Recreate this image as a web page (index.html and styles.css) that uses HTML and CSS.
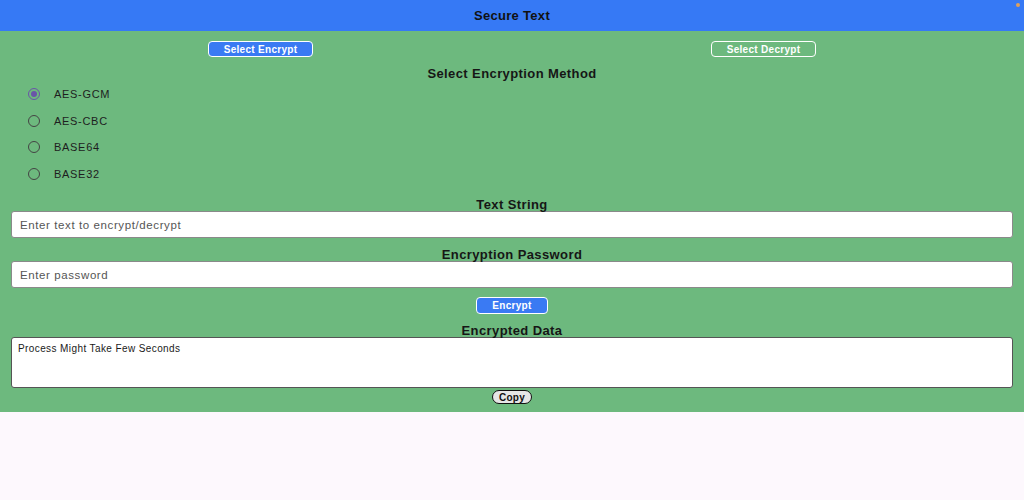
FILE: index.html
```html
<!DOCTYPE html>
<html>
<head>
<meta charset="utf-8">
<link rel="stylesheet" href="styles.css">
</head>
<body>
<header class="topbar">
  <h1 class="title">Secure Text</h1>
  <span class="dot"></span>
</header>
<main class="panel">
  <div class="mode-row">
    <div class="mode-cell"><button class="btn btn-blue">Select Encrypt</button></div>
    <div class="mode-cell"><button class="btn btn-ghost">Select Decrypt</button></div>
  </div>
  <h2 class="heading heading-first">Select Encryption Method</h2>
  <ul class="radios">
    <li class="radio-row"><span class="radio radio-on"></span><span class="radio-label">AES-GCM</span></li>
    <li class="radio-row"><span class="radio"></span><span class="radio-label">AES-CBC</span></li>
    <li class="radio-row"><span class="radio"></span><span class="radio-label">BASE64</span></li>
    <li class="radio-row"><span class="radio"></span><span class="radio-label">BASE32</span></li>
  </ul>
  <h2 class="heading heading-text">Text String</h2>
  <div class="field"><span class="placeholder">Enter text to encrypt/decrypt</span></div>
  <h2 class="heading">Encryption Password</h2>
  <div class="field"><span class="placeholder">Enter password</span></div>
  <div class="center-row action-row"><button class="btn btn-blue btn-small">Encrypt</button></div>
  <h2 class="heading">Encrypted Data</h2>
  <div class="output">Process Might Take Few Seconds</div>
  <div class="center-row copy-row"><button class="btn-copy">Copy</button></div>
</main>
</body>
</html>
```
FILE: styles.css
```css
* { box-sizing: border-box; }
html, body { margin: 0; padding: 0; }
body {
  background: #fdf8fd;
  font-family: "Liberation Sans", Arial, sans-serif;
  color: #1c1c1c;
  width: 1024px;
  height: 500px;
  overflow: hidden;
}
.topbar {
  position: relative;
  height: 31px;
  background: #3679f5;
  display: flex;
  align-items: center;
  justify-content: center;
}
.title {
  margin: 0;
  font-size: 13px;
  font-weight: bold;
  letter-spacing: 0.3px;
  color: #111;
}
.dot {
  position: absolute;
  right: 4px;
  top: 3px;
  width: 4px;
  height: 4px;
  border-radius: 50%;
  background: #e0a05a;
}
.panel {
  background: #6db97e;
  padding: 10px 0 8px;
}
.mode-row {
  display: grid;
  grid-template-columns: 1fr 1fr;
  padding: 0 9px;
}
.mode-cell {
  display: flex;
  justify-content: center;
}
.btn {
  font-family: "Liberation Sans", Arial, sans-serif;
  font-size: 10px;
  font-weight: bold;
  letter-spacing: 0.3px;
  color: #fff;
  border: 1.5px solid #fff;
  border-radius: 4px;
  height: 17px;
  width: 105px;
  padding: 0;
  display: flex;
  align-items: center;
  justify-content: center;
}
.mode-row .btn { height: 16px; }
.btn-blue { background: #3a7af3; }
.btn-ghost { background: #6db97e; }
.btn-small { width: 72px; }
.heading {
  margin: 10px 0 0;
  text-align: center;
  font-size: 13px;
  line-height: 13px;
  font-weight: bold;
  letter-spacing: 0.4px;
  color: #161616;
}
.heading-first { line-height: 14px; }
.heading-text { margin-top: 11px; }
.radios {
  list-style: none;
  margin: 0;
  padding: 0 0 0 28px;
}
.radio-row {
  height: 26.5px;
  display: flex;
  align-items: center;
}
.radio {
  width: 12px;
  height: 12px;
  border: 1.5px solid #444;
  border-radius: 50%;
  display: flex;
  align-items: center;
  justify-content: center;
}
.radio-on { border-color: #6a55a8; }
.radio-on::after {
  content: "";
  width: 6px;
  height: 6px;
  border-radius: 50%;
  background: #6a55a8;
}
.radio-label {
  margin-left: 14px;
  font-size: 11px;
  letter-spacing: 0.7px;
  color: #1e1e1e;
}
.field {
  margin: 0 11px;
  height: 27px;
  background: #fff;
  border: 1px solid #8a8a8a;
  border-radius: 3px;
  display: flex;
  align-items: center;
  padding-left: 8px;
}
.placeholder {
  font-size: 11.5px;
  letter-spacing: 0.6px;
  color: #555;
}
.center-row {
  display: flex;
  justify-content: center;
}
.action-row { margin-top: 9px; }
.output {
  margin: 0 11px;
  height: 51px;
  background: #fff;
  border: 1px solid #555;
  border-radius: 3px;
  padding: 5px 6px;
  font-size: 10px;
  line-height: 12px;
  letter-spacing: 0.4px;
  color: #1a1a1a;
}
.copy-row { margin-top: 2px; }
.btn-copy {
  font-family: "Liberation Sans", Arial, sans-serif;
  font-size: 10px;
  font-weight: bold;
  letter-spacing: 0.3px;
  color: #111;
  background: #e6e6e6;
  border: 1.5px solid #111;
  border-radius: 8px;
  height: 14px;
  width: 40px;
  padding: 0;
  display: flex;
  align-items: center;
  justify-content: center;
}
```
